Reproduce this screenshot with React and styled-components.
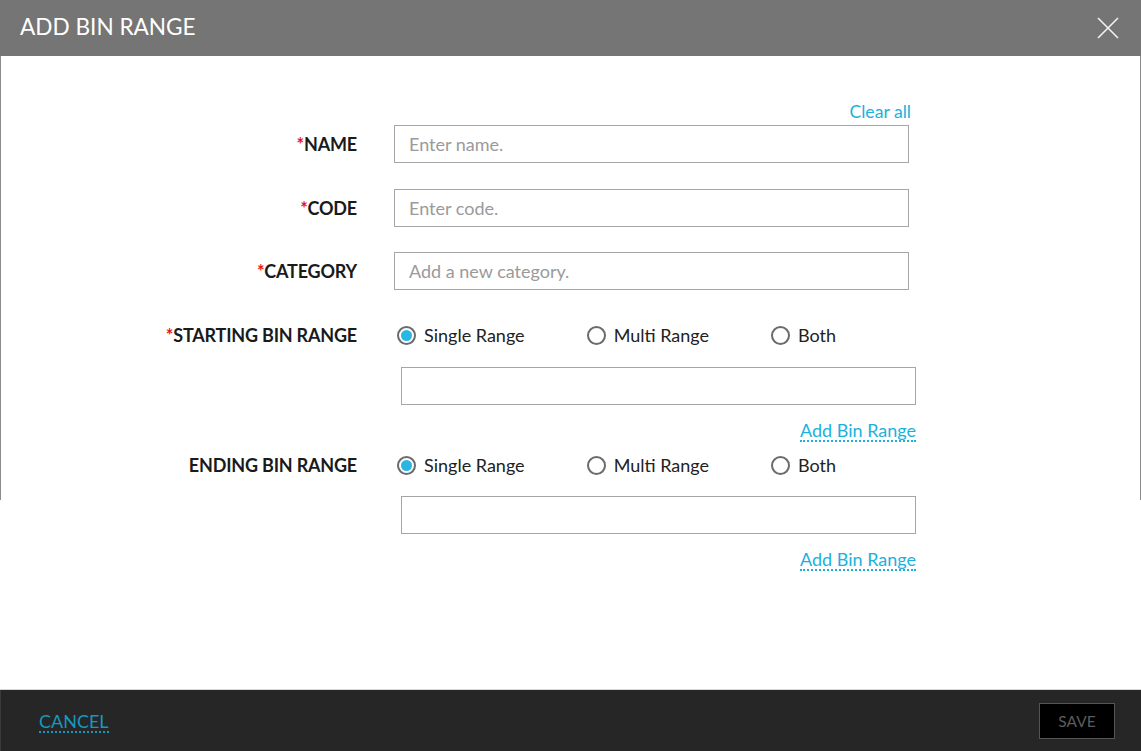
import React, { useState } from "react";
import styled, { createGlobalStyle } from "styled-components";

const GlobalStyle = createGlobalStyle`
  html, body {
    margin: 0;
    padding: 0;
    background: #ffffff;
  }
  body {
    font-family: Lato, "Open Sans", "Liberation Sans", sans-serif;
  }
  * {
    box-sizing: border-box;
  }
`;

const Modal = styled.div`
  width: 1141px;
  height: 751px;
  display: flex;
  flex-direction: column;
  background: #fff;
`;

const Header = styled.div`
  height: 56px;
  flex: 0 0 56px;
  background: #757575;
  display: flex;
  align-items: center;
  justify-content: space-between;
  padding: 0 20px 3px 20px;
`;

const Title = styled.h1`
  margin: 0;
  font-size: 22.6px;
  font-weight: 400;
  color: #fff;
  line-height: 28px;
`;

const CloseButton = styled.button`
  width: 24px;
  height: 24px;
  border: none;
  background: none;
  padding: 0;
  margin-right: 1px;
  margin-top: 3px;
  cursor: pointer;
  display: flex;
  align-items: center;
  justify-content: center;
`;

const Body = styled.div`
  flex: 1;
  background: #fff;
  border-bottom: 1px solid #d8d8d8;
`;

const FormPanel = styled.div`
  height: 444px;
  border-left: 1px solid #8c8c8c;
  border-right: 1px solid #8c8c8c;
  padding-top: 45px;
`;

const Form = styled.div`
  width: 915px;
  display: flex;
  flex-direction: column;
`;

const ClearRow = styled.div`
  display: flex;
  justify-content: flex-end;
  padding-right: 5px;
  height: 24px;
`;

const LinkText = styled.a`
  font-size: 17.6px;
  line-height: 22px;
  color: #1ab2dc;
  text-decoration: none;
  cursor: pointer;
`;

const DottedLink = styled(LinkText)`
  font-size: 18px;
  line-height: 20px;
  border-bottom: 2px dotted #1ab2dc;
`;

const Row = styled.div`
  display: flex;
  align-items: ${(p) => (p.$top ? "flex-start" : "center")};
  margin-top: ${(p) => p.$mt || 0}px;
`;

const Label = styled.label`
  width: 356px;
  flex: 0 0 356px;
  text-align: right;
  font-size: 18px;
  font-weight: 700;
  color: #1a1a1a;
  line-height: 38px;
  margin-right: 37px;
  letter-spacing: -0.2px;
`;

const Star = styled.span`
  color: #e8161c;
`;

const TextInput = styled.input`
  width: 515px;
  height: 38px;
  border: 1px solid #a6a6a6;
  border-radius: 0;
  padding: 0 14px;
  font-family: Lato, "Open Sans", "Liberation Sans", sans-serif;
  font-size: 18px;
  color: #333;
  outline: none;
  &::placeholder {
    color: #9a9a9a;
  }
`;

const RangeBlock = styled.div`
  display: flex;
  flex-direction: column;
`;

const RadioGroup = styled.div`
  display: flex;
  align-items: center;
  height: 38px;
  gap: 62px;
  padding-left: 3px;
`;

const RadioOption = styled.label`
  display: flex;
  align-items: center;
  gap: 8px;
  font-size: 18px;
  color: #222;
  cursor: pointer;
`;

const RadioCircle = styled.span`
  width: 19px;
  height: 19px;
  border-radius: 50%;
  border: 2px solid #6b6b6b;
  display: flex;
  align-items: center;
  justify-content: center;
  &::after {
    content: "";
    width: 11px;
    height: 11px;
    border-radius: 50%;
    background: ${(p) => (p.$checked ? "#2bb5e3" : "transparent")};
  }
`;

const RangeInputWrap = styled.div`
  margin-left: 7px;
  margin-top: ${(p) => p.$mt}px;
  display: flex;
  flex-direction: column;
  align-items: flex-end;
`;

const LinkRow = styled.div`
  margin-top: ${(p) => p.$mt}px;
  display: flex;
  justify-content: flex-end;
`;

const Footer = styled.div`
  height: 61px;
  flex: 0 0 61px;
  background: #262626;
  border-left: 1px solid #3a3a3a;
  display: flex;
  align-items: center;
  justify-content: space-between;
  padding: 0 26px 0 38px;
`;

const CancelLink = styled.a`
  font-size: 18px;
  line-height: 20px;
  color: #1598c2;
  border-bottom: 2px dotted #1598c2;
  cursor: pointer;
  margin-top: 2px;
`;

const SaveButton = styled.button`
  width: 76px;
  height: 36px;
  background: #000;
  border: 1px solid #555;
  color: #5c5c5c;
  font-family: Lato, "Open Sans", "Liberation Sans", sans-serif;
  font-size: 15.5px;
  padding: 0;
  margin-top: 1px;
`;

const options = [
  { value: "single", label: "Single Range" },
  { value: "multi", label: "Multi Range" },
  { value: "both", label: "Both" },
];

const RangeRadios = ({ value, onChange }) => (
  <RadioGroup>
    {options.map((o) => (
      <RadioOption key={o.value} onClick={() => onChange(o.value)}>
        <RadioCircle $checked={value === o.value} />
        {o.label}
      </RadioOption>
    ))}
  </RadioGroup>
);

const App = () => {
  const [startType, setStartType] = useState("single");
  const [endType, setEndType] = useState("single");

  return (
    <Modal>
      <GlobalStyle />
      <Header>
        <Title>ADD BIN RANGE</Title>
        <CloseButton aria-label="Close">
          <svg width="22" height="22" viewBox="0 0 22 22">
            <path d="M1 1 L21 21 M21 1 L1 21" stroke="#f2f2f2" strokeWidth="1.6" />
          </svg>
        </CloseButton>
      </Header>
      <Body>
        <FormPanel>
          <Form>
            <ClearRow>
              <LinkText>Clear all</LinkText>
            </ClearRow>
            <Row>
              <Label>
                <Star>*</Star>NAME
              </Label>
              <TextInput placeholder="Enter name." />
            </Row>
            <Row $mt={26}>
              <Label>
                <Star>*</Star>CODE
              </Label>
              <TextInput placeholder="Enter code." />
            </Row>
            <Row $mt={25}>
              <Label>
                <Star>*</Star>CATEGORY
              </Label>
              <TextInput placeholder="Add a new category." />
            </Row>
            <Row $mt={26} $top>
              <Label>
                <Star>*</Star>STARTING BIN RANGE
              </Label>
              <RangeBlock>
                <RangeRadios value={startType} onChange={setStartType} />
                <RangeInputWrap $mt={13}>
                  <TextInput />
                  <LinkRow $mt={15}>
                    <DottedLink>Add Bin Range</DottedLink>
                  </LinkRow>
                </RangeInputWrap>
              </RangeBlock>
            </Row>
            <Row $mt={4} $top>
              <Label>ENDING BIN RANGE</Label>
              <RangeBlock>
                <RangeRadios value={endType} onChange={setEndType} />
                <RangeInputWrap $mt={12}>
                  <TextInput />
                  <LinkRow $mt={15}>
                    <DottedLink>Add Bin Range</DottedLink>
                  </LinkRow>
                </RangeInputWrap>
              </RangeBlock>
            </Row>
          </Form>
        </FormPanel>
      </Body>
      <Footer>
        <CancelLink>CANCEL</CancelLink>
        <SaveButton>SAVE</SaveButton>
      </Footer>
    </Modal>
  );
};

export default App;
